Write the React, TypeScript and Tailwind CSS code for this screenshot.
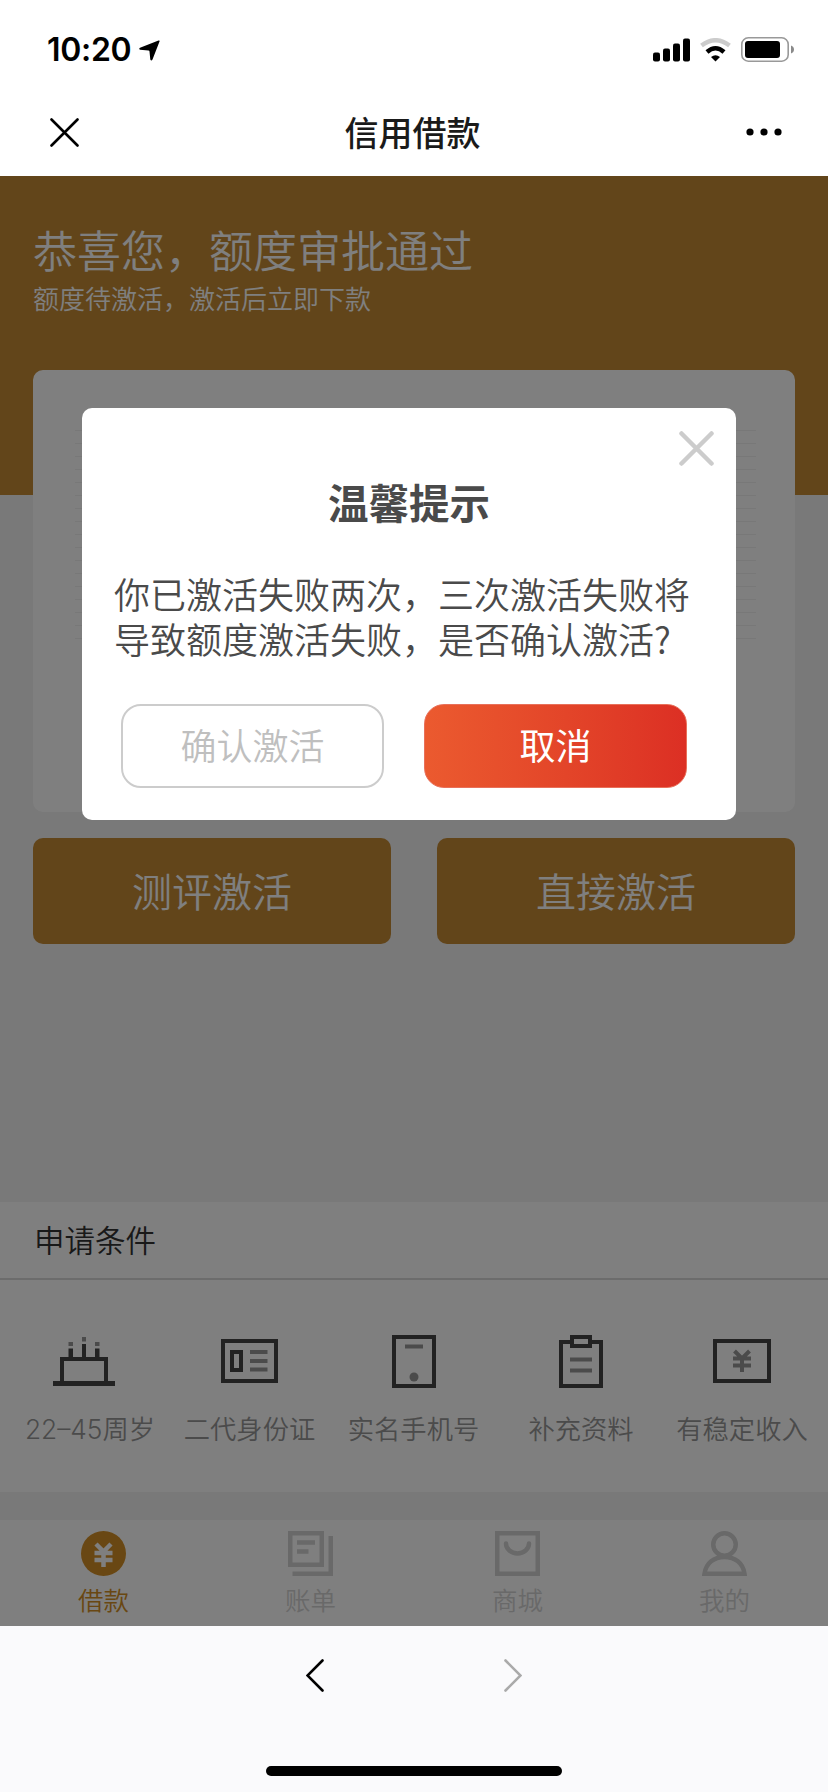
import type { ReactNode } from 'react';

// Faint security-paper lines printed on the quota card
const CARD_LINES = Array.from({ length: 17 }, (_, i) => i);

const CONDITIONS: { label: string; icon: ReactNode; className: string; labelClass?: string }[] = [
  { label: '22–45周岁', icon: <CakeIcon />, className: 'w-[168px]', labelClass: 'pl-[12px]' },
  { label: '二代身份证', icon: <IdCardIcon />, className: 'w-[163px]' },
  { label: '实名手机号', icon: <PhoneIcon />, className: 'w-[165px]' },
  { label: '补充资料', icon: <ClipboardIcon />, className: 'w-[170px]' },
  { label: '有稳定收入', icon: <MoneyIcon />, className: 'w-[152px]' },
];

const TABS: { label: string; icon: ReactNode; active?: boolean }[] = [
  { label: '借款', icon: <CoinIcon />, active: true },
  { label: '账单', icon: <BillIcon /> },
  { label: '商城', icon: <ShopIcon /> },
  { label: '我的', icon: <UserIcon /> },
];

function CakeIcon() {
  return (
    <svg width="62" height="49" viewBox="0 0 62 49" fill="#444">
      <path d="M0 44h62v5H0z" />
      <path fillRule="evenodd" d="M7 20h48v28H7zM11 24v20h40V24z" />
      <path d="M15.500 11.500h4.500v9h-4.500zM29 7h4v14h-4zM42 11.500h4.500v9H42z" />
      <path fill="#979797" d="M15.500 5h4.500v4h-4.500zM29 0h4v4.500h-4zM42 5h4.500v4H42z" />
    </svg>
  );
}

function IdCardIcon() {
  return (
    <svg width="57" height="44" viewBox="0 0 57 44" fill="none" stroke="#444" strokeWidth="4">
      <path d="M2 2h53v40H2zM11 13h9v18h-9z" />
      <path stroke="#979797" d="M29 13h17.500M29 22h17.500M29 30.500h17.500" />
    </svg>
  );
}

function PhoneIcon() {
  return (
    <svg width="44" height="53" viewBox="0 0 44 53" fill="none" stroke="#444" strokeWidth="4">
      <path d="M2 2h40v49H2z" />
      <path stroke="#979797" d="M13 11.500h18" />
      <circle cx="22" cy="42" r="4.500" fill="#979797" stroke="none" />
    </svg>
  );
}

function ClipboardIcon() {
  return (
    <svg width="44" height="53" viewBox="0 0 44 53" fill="none" stroke="#444" strokeWidth="4">
      <path d="M12 7H2v44h40V7H32" />
      <path d="M13 2h18v9H13z" />
      <path stroke="#979797" d="M11 24.500h22M11 35.500h22" />
    </svg>
  );
}

function MoneyIcon() {
  return (
    <svg width="58" height="44" viewBox="0 0 58 44" fill="none" stroke="#444" strokeWidth="4">
      <path d="M2 2h54v40H2z" />
      <path stroke="#979797" d="M21.500 12l7.500 7.500 7.500-7.500M20 19.500h18M20 26.500h18M29 19v14" />
    </svg>
  );
}

function CoinIcon() {
  return (
    <svg width="45" height="45" viewBox="0 0 45 45">
      <circle cx="22.500" cy="22.500" r="22.500" fill="currentColor" />
      <path
        d="M15 13l7.500 7.500L30 13M13.500 22h18M13.500 29h18M22.500 21v15"
        fill="none"
        stroke="#fff"
        strokeWidth="4.500"
      />
    </svg>
  );
}

function BillIcon() {
  return (
    <svg width="45" height="45" viewBox="0 0 45 45" fill="none" stroke="currentColor" strokeWidth="4.500">
      <path d="M2.250 2.250h31.500v31.500H2.250zM9 11.500h18M9 20.500h11.500M42.750 5v37.750H4.500" />
    </svg>
  );
}

function ShopIcon() {
  return (
    <svg width="45" height="45" viewBox="0 0 45 45" fill="none" stroke="currentColor" strokeWidth="4.500">
      <path d="M2.250 2.250h40.500v40.500H2.250z" />
      <path d="M11 12.500a11.500 10 0 0 0 23 0" strokeLinecap="round" />
    </svg>
  );
}

function UserIcon() {
  return (
    <svg width="45" height="45" viewBox="0 0 45 45" fill="none" stroke="currentColor" strokeWidth="4.500">
      <circle cx="22.500" cy="13.500" r="11.250" />
      <path d="M2.500 42.750C4 32 12 26 22.500 26s18.500 6 20 16.750z" />
    </svg>
  );
}

function StatusBar() {
  return (
    <div className="flex h-[88px] items-start justify-between pt-[30px] pr-[34px] pl-[47px]">
      <div className="flex items-center gap-[8px]">
        <span className="font-[Inter] text-[32px] leading-[40px] font-semibold tracking-[-0.3px] text-black">10:20</span>
        <svg width="21" height="21" viewBox="0 0 21 21">
          <path d="M19.500 0.500Q21 0 20.500 1.500L13.500 19.500Q12.300 21.500 11.300 19.500L10.500 11.500Q10.400 10.600 9.500 10.500L1 9.800Q-.5 8.800 1 7.800z" />
        </svg>
      </div>
      <div className="flex items-center pt-[7px]">
        <svg width="37" height="24" viewBox="0 0 37 24">
          <rect y="14.500" width="7" height="9" rx="2" />
          <rect x="10" y="10.500" width="7" height="13" rx="2" />
          <rect x="20" y="5.500" width="7" height="18" rx="2" />
          <rect x="30" y="0.500" width="7" height="23" rx="2" />
        </svg>
        <svg className="ml-[10px]" width="31" height="24" viewBox="0 0 31 24" fill="none" strokeWidth="4.500">
          <path d="M1.500 7.500Q15.500 -3 29.500 7.500" stroke="#ccc" />
          <path d="M7 14Q15.500 6.500 24 14" stroke="#000" />
          <path d="M11 19Q15.500 15.500 20 19L15.500 23.500z" fill="#000" stroke="none" />
        </svg>
        <svg className="ml-[10px]" width="53" height="25" viewBox="0 0 53 25">
          <rect x="0.800" y="0.800" width="46.400" height="23.400" rx="6.500" fill="none" stroke="#999" strokeWidth="1.600" />
          <rect x="4" y="4" width="35" height="17" rx="3" />
          <path d="M50 8.500q3 1.200 3 4t-3 4z" fill="#8a8a8a" />
        </svg>
      </div>
    </div>
  );
}

function NavBar() {
  return (
    <div className="flex h-[88px] items-center justify-between px-[50px]">
      <svg width="29" height="29" viewBox="0 0 29 29" stroke="#000" strokeWidth="2.600" strokeLinecap="round">
        <path d="M1.500 1.500l26 26M27.500 1.500l-26 26" />
      </svg>
      <h1 className="-mt-[2px] text-[34px] font-medium text-[#1a1a1a]">信用借款</h1>
      <svg className="-mr-[4px]" width="36" height="8" viewBox="0 0 36 8">
        <circle cx="4" cy="4" r="3.600" />
        <circle cx="18" cy="4" r="3.600" />
        <circle cx="32" cy="4" r="3.600" />
      </svg>
    </div>
  );
}

function ConfirmDialog() {
  return (
    <div className="mt-[232px] ml-[82px] flex h-[412px] w-[654px] flex-col rounded-[10px] bg-white text-[#4a4a4a]">
      <button className="mt-[23px] mr-[22px] self-end">
        <svg width="35" height="35" viewBox="0 0 35 35" stroke="#ccc" strokeWidth="4.500" strokeLinecap="round">
          <path d="M2.500 2.500l30 30M32.500 2.500l-30 30" />
        </svg>
      </button>
      <h2 className="mt-[6px] text-center text-[40.500px] leading-[60px] font-bold">温馨提示</h2>
      <p className="mt-[39px] ml-[32px] text-[36px] leading-[45px] font-[350]">
        你已激活失败两次，三次激活失败将
        <br />
        导致额度激活失败，是否确认激活?
      </p>
      <div className="mt-[43px] ml-[39px] flex gap-[40px] text-[36px] font-[350]">
        <button className="h-[84px] w-[263px] rounded-[20px] border-2 border-[#ccc] pb-[4px] text-[#bfbfbf]">确认激活</button>
        <button className="h-[84px] w-[263px] rounded-[20px] border border-[#e8705a] bg-linear-to-r from-[#eb5a2f] to-[#dc2f24] pb-[4px] font-normal text-white">
          取消
        </button>
      </div>
    </div>
  );
}

export default function App() {
  return (
    <div className="h-[1792px] w-[828px] overflow-hidden bg-white font-['Noto_Sans_CJK_SC',sans-serif]">
      <StatusBar />
      <NavBar />

      <main className="relative h-[1450px] bg-[#f2f2f2]">
        {/* Quota header */}
        <header className="h-[319px] bg-[#c48a34] pt-[43px] pl-[33px] font-[350] text-white">
          <div className="text-[44px] leading-[60px]">恭喜您，额度审批通过</div>
          <div className="text-[26px] leading-[38px]">额度待激活，激活后立即下款</div>
        </header>

        {/* Quota card, overlapping the header */}
        <section className="relative mx-[33px] -mt-[125px] flex h-[442px] flex-col gap-[12px] rounded-[10px] bg-white pt-[60px] pr-[39px] pl-[42px]">
          {CARD_LINES.map((i) => (
            <div key={i} className="h-px bg-[#f0f0f0]" />
          ))}
        </section>

        <div className="mt-[26px] flex gap-[46px] px-[33px] text-[40px] font-[350] text-white">
          <button className="h-[106px] flex-1 rounded-[10px] bg-[#c48a34] pb-[2px]">测评激活</button>
          <button className="h-[106px] flex-1 rounded-[10px] bg-[#c48a34] pb-[2px]">直接激活</button>
        </div>

        {/* Application conditions */}
        <section className="mt-[258px] h-[290px] bg-white">
          <h3 className="h-[78px] border-b-2 border-[#d8d8d8] pl-[34px] text-[30.500px] leading-[74px] font-[350] text-[#333]">
            申请条件
          </h3>
          <ul className="flex pt-[51px]">
            {CONDITIONS.map((item) => (
              <li key={item.label} className={`flex flex-col items-center ${item.className}`}>
                <div className="flex h-[60px] items-center">{item.icon}</div>
                <span
                  className={`mt-[19px] font-[Inter,'Noto_Sans_CJK_SC',sans-serif] text-[26.300px] leading-[40px] font-[350] whitespace-nowrap text-[#979797] ${item.labelClass ?? ''}`}
                >
                  {item.label}
                </span>
              </li>
            ))}
          </ul>
        </section>

        <nav className="mt-[28px] flex h-[106px] bg-white">
          {TABS.map((tab) => (
            <div
              key={tab.label}
              className={`flex flex-1 flex-col items-center pt-[11px] text-[25.500px] leading-[34px] font-[350] ${tab.active ? 'text-[#d38f26]' : 'text-[#d2d2d2]'}`}
            >
              {tab.icon}
              <span className="mt-[6px]">{tab.label}</span>
            </div>
          ))}
        </nav>

        <div className="absolute inset-0 bg-black/50">
          <ConfirmDialog />
        </div>
      </main>

      {/* Browser toolbar */}
      <footer className="flex h-[166px] flex-col items-center bg-[#fafafc]">
        <div className="flex gap-[180px] pt-[33px]">
          <svg width="18" height="33" viewBox="0 0 18 33" fill="none" stroke="#000" strokeWidth="2.600" strokeLinecap="round">
            <path d="M16.500 1.500L1.500 16.500l15 15" />
          </svg>
          <svg width="18" height="33" viewBox="0 0 18 33" fill="none" stroke="#aaa" strokeWidth="2.600" strokeLinecap="round">
            <path d="M1.500 1.500l15 15-15 15" />
          </svg>
        </div>
        <div className="mt-[74px] h-[10px] w-[296px] rounded-full bg-black" />
      </footer>
    </div>
  );
}
